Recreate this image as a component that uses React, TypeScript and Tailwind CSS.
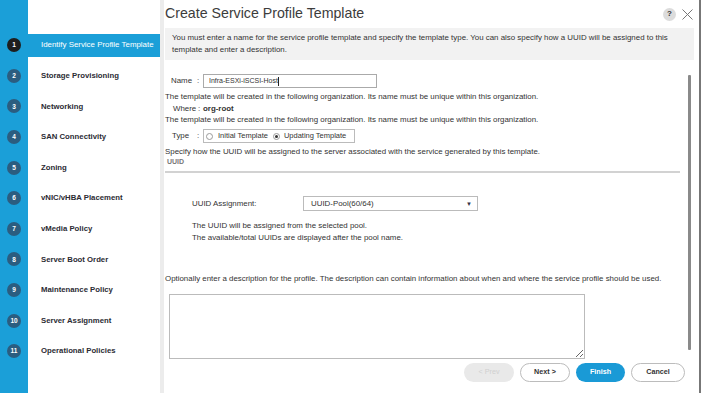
import React from "react";

const steps = [
  "Identify Service Profile Template",
  "Storage Provisioning",
  "Networking",
  "SAN Connectivity",
  "Zoning",
  "vNIC/vHBA Placement",
  "vMedia Policy",
  "Server Boot Order",
  "Maintenance Policy",
  "Server Assignment",
  "Operational Policies",
];

const Sidebar = () => {
  return (
    <div className="w-[160px] h-full pt-[30px] bg-[linear-gradient(90deg,#1b9fd8_28px,#ffffff_28px)]">
      {steps.map((s, i) => (
        <div key={s} className="flex h-[30.6px] items-center">
          <div className="w-[28px] flex justify-center">
            <div
              className={
                "w-[14px] h-[14px] rounded-full flex items-center justify-center text-white font-bold text-[6.5px] " +
                (i === 0 ? "bg-[#1e1e1e]" : "bg-[#2b5d80]")
              }
            >
              {i + 1}
            </div>
          </div>
          {i === 0 ? (
            <div className="flex-1 h-[23px] bg-[#1b9fd8] flex items-center pl-[13px] text-white text-[7.9px] whitespace-nowrap">
              {s}
            </div>
          ) : (
            <div className="flex-1 pl-[13px] text-[#2b2b33] font-bold text-[7.75px] whitespace-nowrap">{s}</div>
          )}
        </div>
      ))}
    </div>
  );
};

const Radio = ({ checked }: { checked?: boolean }) => (
  <span className="w-[7px] h-[7px] rounded-full border border-[#9a9a9a] bg-white flex items-center justify-center">
    {checked && <span className="w-[3px] h-[3px] rounded-full bg-[#333]" />}
  </span>
);

export default function App() {
  return (
    <div
      className="w-[701px] h-[393px] flex bg-white text-[#333] overflow-hidden"
      style={{ fontFamily: '"Liberation Sans", Arial, sans-serif' }}
    >
      <Sidebar />
      <div className="w-[4px] h-full bg-[#ececec]" />
      <div className="flex-1 flex flex-col min-w-0">
        {/* header */}
        <div className="h-[28px] flex items-center justify-between">
          <div className="ml-[1px] text-[14.2px] text-[#3c3c3c] whitespace-nowrap">Create Service Profile Template</div>
          <div className="flex items-center gap-[6px] mr-[6px]">
            <div className="w-[13px] h-[13px] rounded-full bg-[#dcdcdc] flex items-center justify-center text-[8px] font-bold text-[#333]">
              ?
            </div>
            <svg width="11" height="11" viewBox="0 0 11 11">
              <path d="M0.5 0.5 L10.5 10.5 M10.5 0.5 L0.5 10.5" stroke="#777" strokeWidth="1" fill="none" />
            </svg>
          </div>
        </div>

        {/* info */}
        <div className="ml-[1px] mr-[5px] h-[32px] bg-[#f2f2f2] pl-[7px] pt-[4px] text-[7.9px] leading-[12px] text-[#333]">
          <div className="whitespace-nowrap">
            You must enter a name for the service profile template and specify the template type. You can also specify how a UUID will be assigned to this
          </div>
          <div>template and enter a description.</div>
        </div>

        {/* body */}
        <div className="h-[300px] flex">
          <div className="flex-1 flex flex-col text-[7.9px] leading-[12px]">
            <div className="mt-[14px] h-[14px] flex items-center">
              <span className="ml-[7px] w-[26px]">Name</span>
              <span className="w-[6px]">:</span>
              <div className="w-[174px] h-[14px] border border-[#aaa] flex items-center pl-[5px] text-[7px]">
                Infra-ESXi-iSCSI-Host
                <span className="w-px h-[9px] bg-[#222]" />
              </div>
            </div>
            <div className="mt-[3px] h-[12px] ml-[1px] whitespace-nowrap">
              The template will be created in the following organization. Its name must be unique within this organization.
            </div>
            <div className="h-[11px] flex items-center">
              <span className="ml-[9px] w-[25px]">Where</span>
              <span className="w-[5px]">:</span>
              <span className="font-bold">org-root</span>
            </div>
            <div className="h-[12px] ml-[1px] whitespace-nowrap">
              The template will be created in the following organization. Its name must be unique within this organization.
            </div>
            <div className="mt-[3px] h-[14px] flex items-center">
              <span className="ml-[8px] w-[25px]">Type</span>
              <span className="w-[6px]">:</span>
              <div className="w-[152px] h-[14px] border border-[#bbb] flex items-center pl-[2px] gap-[5px] text-[7.5px]">
                <Radio />
                <span>Initial Template</span>
                <Radio checked />
                <span className="-ml-[1px]">Updating Template</span>
              </div>
            </div>
            <div className="mt-[3px] h-[11px] ml-[1px] whitespace-nowrap leading-[11px]">
              Specify how the UUID will be assigned to the server associated with the service generated by this template.
            </div>
            <div className="h-[10px] ml-[3px] leading-[10px] text-[7px] text-[#777] font-bold">UUID</div>
            <div className="mt-[4px] mr-[8px] ml-[1px] h-[2px] bg-[#d2d2d2]" />
            <div className="mt-[23px] h-[15px] flex items-center">
              <span className="ml-[28px] w-[111px]">UUID Assignment:</span>
              <div className="w-[175px] h-[15px] border border-[#bbb] flex items-center justify-between pl-[7px] pr-[5px]">
                <span>UUID-Pool(60/64)</span>
                <span className="text-[6px] text-[#334]">▼</span>
              </div>
            </div>
            <div className="mt-[9px] ml-[28px] h-[12px]">The UUID will be assigned from the selected pool.</div>
            <div className="ml-[28px] h-[12px]">The available/total UUIDs are displayed after the pool name.</div>
            <div className="mt-[29px] ml-[1px] h-[12px] whitespace-nowrap">
              Optionally enter a description for the profile. The description can contain information about when and where the service profile should be used.
            </div>
            <textarea className="mt-[9px] ml-[5px] w-[416px] h-[65px] border border-[#bbb] outline-none resize-y bg-white" />
          </div>
          <div className="w-[3px] mr-[8px] pt-[15px]">
            <div className="h-[275px] bg-[#8a8a8a] rounded-[1px]" />
          </div>
        </div>

        {/* footer */}
        <div className="mt-[3px] h-[19px] flex justify-end gap-[6px] mr-[14px] text-[7.2px] font-bold">
          <button className="w-[50px] h-[19px] rounded-full bg-[#e9e9e9] text-[#d0d0d0] font-normal">&lt; Prev</button>
          <button className="w-[50px] h-[19px] rounded-full border border-[#bcbcbc] bg-white text-[#333]">Next &gt;</button>
          <button className="w-[49px] h-[19px] rounded-full bg-[#1a9ad6] text-white">Finish</button>
          <button className="w-[54px] h-[19px] rounded-full border border-[#bcbcbc] bg-white text-[#333]">Cancel</button>
        </div>
      </div>
      <div className="w-[2px] h-full bg-[#777]" />
    </div>
  );
}
